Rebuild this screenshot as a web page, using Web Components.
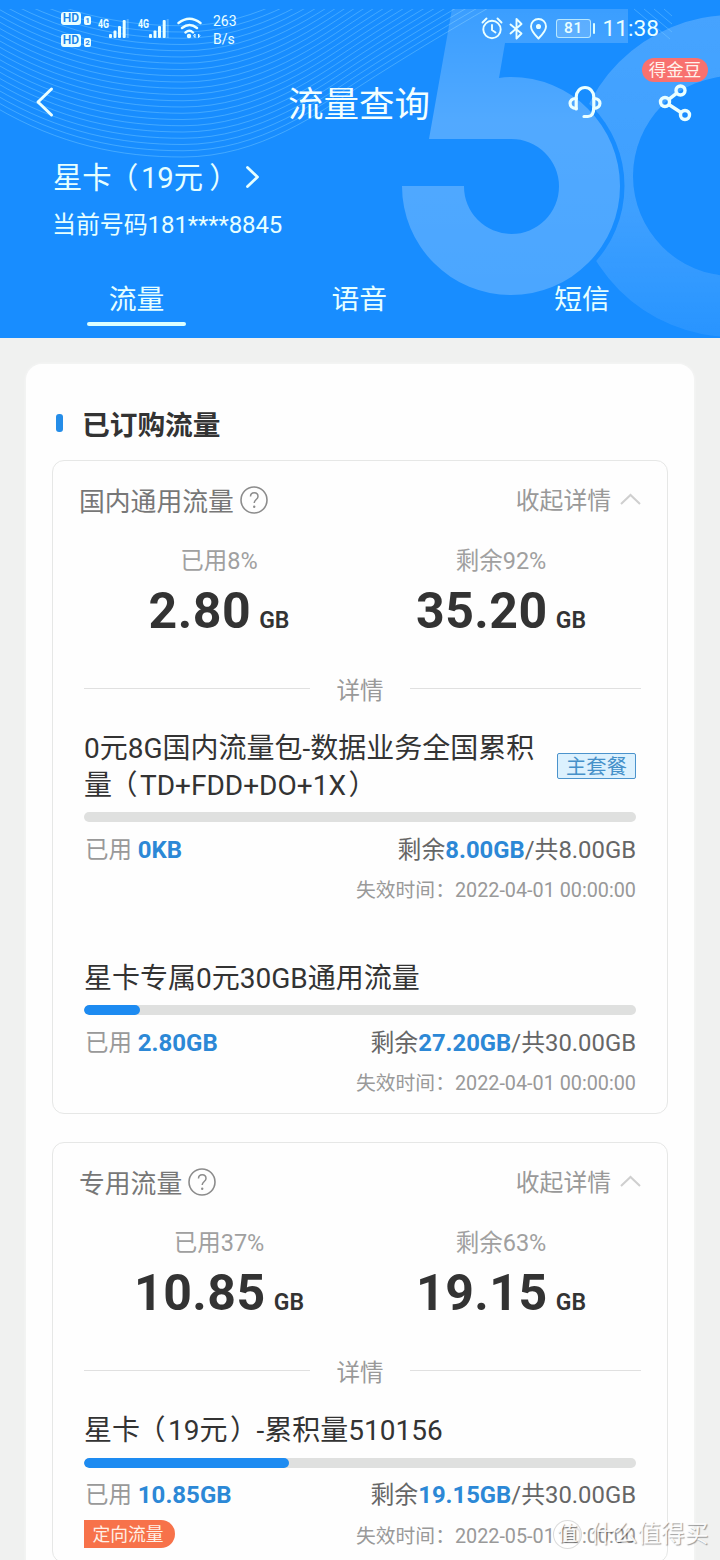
<!DOCTYPE html>
<html lang="zh-CN">
<head>
<meta charset="utf-8">
<title>流量查询</title>
<style>
  html, body { margin: 0; height: 1560px; overflow: hidden; }
  body { background: #f0f1f0; font-family: Roboto, "Noto Sans CJK SC", sans-serif; color: #333; }
</style>
</head>
<body>
<flow-page></flow-page>
<script>
const define = (name, html, setup) => {
  const tpl = document.createElement('template');
  tpl.innerHTML = html;
  customElements.define(name, class extends HTMLElement {
    connectedCallback() {
      if (this.shadowRoot) return;
      const root = this.attachShadow({ mode: 'open' });
      root.append(tpl.content.cloneNode(true));
      if (setup) setup(root, this);
    }
  });
};

define('header-art', `
<style>
  :host { position: absolute; inset: 0; display: block; }
  svg { display: block; }
</style>
<svg width="720" height="338" viewBox="0 0 720 338">
  <defs>
    <linearGradient id="five" x1="0" y1="0" x2="0" y2="1">
      <stop offset="0" stop-color="#fff" stop-opacity=".15"/>
      <stop offset=".4" stop-color="#fff" stop-opacity=".25"/>
      <stop offset="1" stop-color="#fff" stop-opacity=".22"/>
    </linearGradient>
    <linearGradient id="gee" x1="0" y1="0" x2="0" y2="1">
      <stop offset="0" stop-color="#fff" stop-opacity=".2"/>
      <stop offset=".6" stop-color="#fff" stop-opacity=".17"/>
      <stop offset="1" stop-color="#fff" stop-opacity=".07"/>
    </linearGradient>
    <clipPath id="below"><rect x="0" y="9" width="720" height="329"/></clipPath>
    <mask id="gap"><rect width="720" height="338" fill="#fff"/><circle cx="511" cy="186" r="113.5"/></mask>
  </defs>
  <g class="waves" clip-path="url(#below)" fill="none" stroke="#7fd0ff" stroke-opacity=".42" stroke-width="1"></g>
  <path fill="url(#five)" d="M452 9H628V43H505L499 78Q505 77 511 77A109 109 0 1 1 402 186H464A47.5 47.5 0 1 0 511 139H429Z"/>
  <path mask="url(#gap)" fill="url(#gee)" fill-rule="evenodd" d="M572 176a161 161 0 1 0 322 0a161 161 0 1 0 -322 0ZM633 176a100 100 0 1 0 200 0a100 100 0 1 0 -200 0Z"/>
  <path d="M634 9l36 30M644 9l28 23M654 9l18 15M664 9l8 7" stroke="#7fd0ff" stroke-opacity=".4" fill="none"/>
</svg>`, root => {
  const g = root.querySelector('.waves');
  for (let i = 0; i < 22; i++) {
    const p = document.createElementNS('http://www.w3.org/2000/svg', 'path');
    p.setAttribute('d', 'M-5 107C60 145 120 157 183 157C260 157 320 112 360 86C400 60 450 30 490 7');
    p.setAttribute('transform', `translate(0 ${-6.25 * i})`);
    g.append(p);
  }
});

define('signal-bars', `
<style>:host { display: block; width: 31px; height: 22px; } svg { display: block; }</style>
<svg width="31" height="22" viewBox="0 0 31 22" fill="#eaffff">
  <text x="0" y="10.500" font-family="Roboto" font-size="13" font-weight="700" textLength="11" lengthAdjust="spacingAndGlyphs">4G</text>
  <rect x="11" y="17" width="3" height="4" rx="1"/><rect x="15.5" y="13.5" width="3" height="7.5" rx="1"/>
  <rect x="20" y="9" width="3" height="12" rx="1"/><rect x="24.700" y="3" width="3" height="18" rx="1"/>
  <rect x="28.700" y="2" width="2" height="19" opacity=".25"/>
</svg>`);

define('hd-badge', `
<style>
  :host { display: flex; align-items: flex-end; gap: 3px; height: 13px; font: 700 12px/13px Roboto, sans-serif; color: #1a84ea; }
  b { width: 20px; height: 13px; border-radius: 3px; background: #eaffff; text-align: center; font-weight: 600; }
  i { width: 7px; height: 9px; border-radius: 2px; background: #eaffff; font: 700 8px/9px Roboto, sans-serif; text-align: center; }
</style><b>HD</b><i><slot></slot></i>`);

define('status-bar', `
<style>
  :host { display: flex; height: 60px; padding-left: 61px; color: #eaffff; box-sizing: border-box; }
  .hd { display: flex; flex-direction: column; gap: 9px; margin-top: 11.5px; width: 30px; }
  signal-bars { margin: 17px 0 0 7px; }
  signal-bars + signal-bars { margin-left: 9px; }
  svg { display: block; flex: none; }
  .wifi { margin: 17px 0 0 8px; }
  .net { margin: 11.500px 0 0 11px; font-size: 14px; line-height: 18px; width: 32px; }
  .right { display: flex; margin-left: 236px; }
  .bat { box-sizing: border-box; width: 35px; height: 19px; margin: 19px 0 0 9px; border: 1px solid rgba(221,255,255,.7); border-radius: 3px; background: rgba(255,255,255,.16); font: 500 15.500px/17px Roboto, sans-serif; letter-spacing: .6px; text-align: center; }
  .nub { width: 2px; height: 11px; margin: 23px 0 0 1.500px; background: #dff; border-radius: 1px; }
  .time { margin: 15px 0 0 8px; font-size: 22.700px; line-height: 28px; white-space: nowrap; }
</style>
<div class="hd"><hd-badge>1</hd-badge><hd-badge>2</hd-badge></div>
<signal-bars></signal-bars><signal-bars></signal-bars>
<svg class="wifi" width="25" height="22" viewBox="0 0 25 22" fill="none" stroke="#eaffff" stroke-width="2.400" stroke-linecap="round">
  <path d="M1.500 6Q12.500-2.500 23.500 6M5 11Q12.500 5 20 11M8.500 15.500Q12.500 12 16 15.500"/>
  <circle cx="12" cy="19" r="1" /><path d="M18 17.500v3l-1.200-1.500zM21.500 17.500v3l1.200-1.500z" stroke-width="1"/>
</svg>
<div class="net">263<br>B/s</div>
<div class="right">
  <svg width="66" height="24" viewBox="0 0 66 24" fill="none" stroke="#eaffff" stroke-width="1.900" stroke-linecap="round" stroke-linejoin="round" style="margin-top:17px">
    <circle cx="11" cy="12.500" r="8.700"/><path d="M11 8v5l3.500 2.500M1.500 5.500l4-4M20.500 5.500l-4-4"/>
    <path d="M29.500 7.500l11 9-5 5V2l5 5-11 9.500"/>
    <path d="M57.500 21.500C53 17 50 13.500 50 9.500a7.500 7.500 0 0 1 15 0C65 13.500 62 17 57.500 21.500Z"/><circle cx="57.500" cy="9.500" r="1.600" fill="#eaffff"/>
  </svg>
  <div class="bat">81</div><div class="nub"></div><div class="time">11:38</div>
</div>`);

define('title-bar', `
<style>
  :host { display: flex; align-items: center; height: 84px; padding-bottom: 4px; }
  svg { display: block; flex: none; }
  h1 { margin: 6px 0 0 234px; width: 144px; font: 400 35.500px/44px Roboto, "Noto Sans CJK SC", sans-serif; color: #f3ffff; white-space: nowrap; }
  .share { position: relative; margin-left: 55px; }
  .badge { position: absolute; left: -16px; top: -24.500px; width: 66px; height: 24px; border-radius: 12px; background: #f8716f; color: #fff3ec; font-size: 17.500px; line-height: 24.500px; text-align: center; white-space: nowrap; }
</style>
<svg style="margin-left:35px" width="19" height="32" viewBox="0 0 19 32" fill="none" stroke="#eaffff" stroke-width="3" stroke-linecap="round" stroke-linejoin="round"><path d="M16.500 3L3 16L16.500 29"/></svg>
<h1>流量查询</h1>
<svg style="margin-left:135px" width="36" height="36" viewBox="0 0 36 36" fill="none" stroke="#eaffff" stroke-width="3.200" stroke-linecap="round" stroke-linejoin="round">
  <path d="M9.200 25V13a8.800 9.500 0 0 1 17.600 0V23C26.800 29 25 32.500 21 32.500H17"/>
  <path d="M9.200 14.500C1 14 1 24.500 9.200 24.500M26.800 14.500C35 14 35 24.500 26.800 24.500"/>
</svg>
<div class="share">
  <svg width="36" height="40" viewBox="0 0 36 40" fill="none" stroke="#eaffff" stroke-width="3.400">
    <circle cx="22.500" cy="8.500" r="4.500"/><circle cx="7" cy="20" r="4.500"/><circle cx="27" cy="33" r="4.500"/>
    <path d="M10.800 17.300L18.800 11.200M10.800 22.500L23 30.500"/>
  </svg>
  <div class="badge">得金豆</div>
</div>`);

define('tab-item', `
<style>
  :host { display: flex; flex-direction: column; align-items: center; width: 100px; font-size: 27.800px; line-height: 40px; color: #e6ffff; }
  i { width: 99px; height: 4px; margin-top: 2.500px; border-radius: 2px; }
  :host([active]) i { background: #dcffff; }
</style><span><slot></slot></span><i></i>`);

define('app-header', `
<style>
  :host { display: block; position: relative; height: 338px; background: #188dff; color: #e6ffff; overflow: hidden; }
  .front { position: relative; }
  .plan { display: flex; align-items: center; height: 40px; margin-left: 53px; margin-top: 10px; font-size: 29.300px; line-height: 40px; white-space: nowrap; }
  .plan svg { margin: -2px 0 0 13px; }
  .po { margin: 0 2.500px 0 -2.500px; }
  .pc { margin: 0 -6px 0 6px; }
  .num { margin: 12px 0 0 52px; font-size: 24px; line-height: 30px; letter-spacing: -.1px; }
  nav { display: flex; justify-content: space-between; padding: 0 88px 0 86.500px; margin-top: 39.500px; }
</style>
<header-art></header-art>
<div class="front">
  <status-bar></status-bar>
  <title-bar></title-bar>
  <div class="plan"><span>星卡<span class="po">（</span>19元<span class="pc">）</span></span><svg width="16" height="24" viewBox="0 0 16 24" fill="none" stroke="#e6ffff" stroke-width="2.800" stroke-linecap="round" stroke-linejoin="round"><path d="M2.500 2.500L12.500 12L2.500 21.500"/></svg></div>
  <div class="num">当前号码181****8845</div>
  <nav><tab-item active>流量</tab-item><tab-item>语音</tab-item><tab-item>短信</tab-item></nav>
</div>`);

define('usage-stat', `
<style>
  :host { display: block; width: 282px; text-align: center; white-space: nowrap; }
  .l { font-size: 23.500px; line-height: 30px; color: #a0a0a0; }
  .v { font-size: 50px; line-height: 60px; margin-top: 5px; font-weight: 700; color: #333; letter-spacing: .5px; }
  .v small { font-size: 23px; letter-spacing: 0; font-weight: 600; margin-left: 8px; }
</style>
<div class="l"><slot name="label"></slot></div>
<div class="v"><slot></slot><small>GB</small></div>`);

define('usage-item', `
<style>
  :host { display: block; margin: 0 31px 0 31px; white-space: nowrap; }
  .name { display: flex; align-items: center; justify-content: space-between; font-size: 28px; line-height: 36.500px; color: #333; padding-top: 1px; }
  .bar { height: 10px; border-radius: 5px; background: #dfe0df; margin-top: 8px; overflow: hidden; }
  .bar i { display: block; height: 10px; border-radius: 5px; background: #1d8bf1; }
  .row { display: flex; justify-content: space-between; margin-top: 12.500px; font-size: 23.850px; line-height: 30px; color: #666; }
  .row .u { color: #999; margin-left: 1px; font-size: 23.500px; }
  .u b { font-size: 24px; }
  b { font-weight: 700; color: #2c88d6; }
  .foot { display: flex; align-items: center; justify-content: space-between; height: 28px; margin-top: 12.500px; margin-bottom: -1px; }
  .exp { margin-left: auto; font-size: 19.800px; line-height: 28px; color: #999; }
  ::slotted(.po) { margin: 0 2.500px 0 -2.500px; }
  ::slotted(.pc) { margin: 0 -1.500px 0 2.500px; }
</style>
<div class="name"><span><slot></slot></span><slot name="tag"></slot></div>
<div class="bar"><i></i></div>
<div class="row"><span class="u">已用 <b class="used"></b></span><span>剩余<b class="left"></b>/共<span class="total"></span></span></div>
<div class="foot"><slot name="foot"></slot><span class="exp"></span></div>`, (root, el) => {
  root.querySelector('i').style.width = el.getAttribute('fill') + 'px';
  for (const k of ['used', 'left', 'total']) root.querySelector('.' + k).textContent = el.getAttribute(k);
  root.querySelector('.exp').textContent = '失效时间：' + el.getAttribute('expires');
});

define('main-tag', `
<style>:host { display: block; box-sizing: border-box; width: 79px; height: 26px; margin-top: -4px; border: 1px solid #4b93cc; border-radius: 2px; background: #dcf1fe; color: #4590c9; font-size: 20.300px; line-height: 26px; text-align: center; }</style><slot></slot>`);
define('directed-tag', `
<style>:host { display: block; width: 91px; height: 28px; margin-top: -5px; box-sizing: border-box; padding-left: 8.500px; border-radius: 0 14px 14px 0; background: #f7724a; color: #fff0e6; font-size: 17.800px; line-height: 29px; }</style><slot></slot>`);

define('usage-panel', `
<style>
  :host { display: block; box-sizing: border-box; width: 616px; border: 1px solid #e6e7e6; border-radius: 12px; background: #fefefe; }
  .head { display: flex; align-items: center; height: 40px; padding: 19px 26px 0; white-space: nowrap; }
  .t { font-size: 25.800px; line-height: 40px; color: #777; padding-top: 3px; }
  .head .q { margin-left: 6px; }
  .more { margin-left: auto; font-size: 23.800px; line-height: 40px; color: #999; padding-top: 1px; }
  .stats { display: flex; padding: 26px 25px 0; }
  .div { display: flex; align-items: center; justify-content: space-between; height: 30px; margin: 25px 26px 0 31px; font-size: 23.500px; line-height: 30px; color: #999; }
  .div i { width: 226px; height: 1px; background: #e0e0e0; margin-top: -5px; }
  .div i:last-child { width: 231px; }
  .list { margin-top: 24px; }
  ::slotted(usage-item:not(:first-of-type)) { margin-top: 55.500px; }
</style>
<div class="head"><span class="t"></span>
  <svg class="q" width="28" height="28" viewBox="0 0 28 28"><circle cx="14" cy="14" r="13" fill="none" stroke="#8c8c8c" stroke-width="1.600"/><path d="M10.500 10.500c0-5 7.500-5 7.500 0c0 3-3.800 3-3.800 6.500" fill="none" stroke="#8c8c8c" stroke-width="1.500"/><circle cx="14.200" cy="20.800" r="1.200" fill="#8c8c8c"/></svg>
  <span class="more">收起详情</span>
  <svg style="margin:-3px 0 0 9px" width="21" height="12" viewBox="0 0 21 12" fill="none" stroke="#cfcfcf" stroke-width="2"><path d="M1 11L10.500 2L20 11"/></svg>
</div>
<div class="stats">
  <usage-stat><span slot="label" class="ul"></span><span class="uv"></span></usage-stat>
  <usage-stat><span slot="label" class="rl"></span><span class="rv"></span></usage-stat>
</div>
<div class="div"><i></i><span>详情</span><i></i></div>
<div class="list"><slot></slot></div>`, (root, el) => {
  const set = (s, v) => root.querySelector(s).textContent = v;
  set('.t', el.getAttribute('name'));
  set('.ul', '已用' + el.getAttribute('used-pct') + '%');
  set('.rl', '剩余' + el.getAttribute('left-pct') + '%');
  set('.uv', el.getAttribute('used'));
  set('.rv', el.getAttribute('left'));
});

define('water-mark', `
<style>
  :host { position: absolute; left: 553px; top: 1518px; display: flex; align-items: center; gap: 8px; height: 32px; color: rgba(255,255,255,.92); font-size: 23.700px; line-height: 32px; white-space: nowrap; text-shadow: 1px 1px 1px rgba(0,0,0,.38); }
  b { width: 27px; height: 27px; border: 1.500px solid rgba(215,215,215,.9); border-radius: 50%; background: rgba(255,255,255,.75); font: 500 20px/27px Roboto, "Noto Sans CJK SC", sans-serif; text-align: center; text-shadow: 1px 1px 1px rgba(0,0,0,.55); }
</style><b>值</b><span>什么值得买</span>`);

define('flow-page', `
<style>
  :host { display: block; position: relative; width: 720px; height: 1560px; overflow: hidden; }
  main { box-sizing: border-box; margin: 26px 26px 0; height: 1250px; padding: 0 26px; border-radius: 16px; background: #fefefe; box-shadow: 0 0 3px #fafafa; }
  h2 { display: flex; align-items: center; height: 40px; margin: 0; padding: 42px 0 14px 4px; font: 700 27.700px/40px Roboto, "Noto Sans CJK SC", sans-serif; color: #333; }
  h2 i { width: 7px; height: 18px; margin: -6px 19px 0 0; border-radius: 3px; background: #258de8; }
  usage-panel { height: 654px; }
  usage-panel + usage-panel { height: 421px; margin-top: 28px; }
</style>
<app-header></app-header>
<main>
  <h2><i></i>已订购流量</h2>
  <usage-panel name="国内通用流量" used-pct="8" left-pct="92" used="2.80" left="35.20">
    <usage-item fill="0" used="0KB" left="8.00GB" total="8.00GB" expires="2022-04-01 00:00:00">0元8G国内流量包-数据业务全国累积<br>量<span class="po">（</span>TD+FDD+DO+1X<span class="pc">）</span><main-tag slot="tag">主套餐</main-tag></usage-item>
    <usage-item fill="56" used="2.80GB" left="27.20GB" total="30.00GB" expires="2022-04-01 00:00:00">星卡专属0元30GB通用流量</usage-item>
  </usage-panel>
  <usage-panel name="专用流量" used-pct="37" left-pct="63" used="10.85" left="19.15">
    <usage-item fill="205" used="10.85GB" left="19.15GB" total="30.00GB" expires="2022-05-01 00:00:00">星卡<span class="po">（</span>19元<span class="pc">）</span>-累积量510156<directed-tag slot="foot">定向流量</directed-tag></usage-item>
  </usage-panel>
</main>
<water-mark></water-mark>`);
</script>
</body>
</html>
